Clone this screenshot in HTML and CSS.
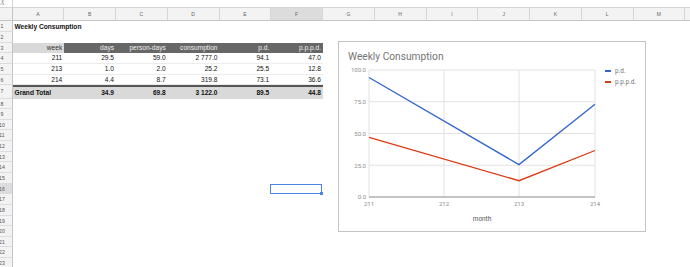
FILE: index.html
```html
<!DOCTYPE html>
<html lang="en">
<head>
  <meta charset="UTF-8" />
  <title>Weekly Consumption</title>
  <link rel="stylesheet" href="styles.css">
</head>
<body>
  <div class="formula-bar">
    <span class="fx-icon">X</span>
    <div class="fx-sep"></div>
  </div>
  <div class="sheet" id="sheet">
    <!-- Rows will be injected here -->
  </div>

  <div class="chart">
    <svg width="308" height="191" viewBox="338 41 308 191">
      <text class="chart-title" x="348" y="60">Weekly Consumption</text>

      <g class="grid">
        <line x1="369" y1="70" x2="595" y2="70" />
        <line x1="369" y1="101.75" x2="595" y2="101.75" />
        <line x1="369" y1="133.5" x2="595" y2="133.5" />
        <line x1="369" y1="165.25" x2="595" y2="165.25" />
        <line x1="369" y1="70" x2="369" y2="197" />
        <line x1="444" y1="70" x2="444" y2="197" />
        <line x1="519" y1="70" x2="519" y2="197" />
        <line x1="595" y1="70" x2="595" y2="197" />
      </g>
      <line class="baseline" x1="369" y1="197" x2="595" y2="197" />

      <g class="y-labels">
        <text x="366" y="72.2">100.0</text>
        <text x="366" y="104">75.0</text>
        <text x="366" y="135.7">50.0</text>
        <text x="366" y="167.5">25.0</text>
        <text x="366" y="199.2">0.0</text>
      </g>
      <g class="x-labels">
        <text x="369" y="205.5">211</text>
        <text x="444" y="205.5">212</text>
        <text x="519" y="205.5">213</text>
        <text x="595" y="205.5">214</text>
      </g>
      <text class="axis-title" x="482" y="220.5">month</text>

      <polyline class="series-pd" points="369,77.5 519,164.6 595,104.2" />
      <polyline class="series-pppd" points="369,137.3 519,180.7 595,150.5" />

      <line class="legend-pd" x1="605" y1="71" x2="611" y2="71" />
      <text class="legend-text" x="615" y="73.2">p.d.</text>
      <line class="legend-pppd" x1="605" y1="82" x2="611" y2="82" />
      <text class="legend-text" x="615" y="84.2">p.p.p.d.</text>
    </svg>
  </div>

  <div class="selection"><span class="handle"></span></div>

  <script>
    const columns = ['A','B','C','D','E','F','G','H','I','J','K','L','M',''];

    // Pivot table content, keyed by row number
    const rows = {
      1: { cls: 'title-row', cells: ['Weekly Consumption'] },
      3: { cls: 'head-row', cells: ['week', 'days', 'person-days', 'consumption', 'p.d.', 'p.p.p.d.'] },
      4: { cls: 'data-row', cells: ['211', '29.5', '59.0', '2 777.0', '94.1', '47.0'] },
      5: { cls: 'data-row', cells: ['213', '1.0', '2.0', '25.2', '25.5', '12.8'] },
      6: { cls: 'data-row', cells: ['214', '4.4', '8.7', '319.8', '73.1', '36.6'] },
      7: { cls: 'total-row', cells: ['Grand Total', '34.9', '69.8', '3 122.0', '89.5', '44.8'] }
    };

    function buildSheet() {
      const sheet = document.getElementById('sheet');

      const head = document.createElement('div');
      head.className = 'row col-heads';
      head.innerHTML = '<div class="row-head corner"></div>' + columns.map(c =>
        `<div class="col-head${c === 'F' ? ' active' : ''}">${c}</div>`).join('');
      sheet.appendChild(head);

      for (let n = 1; n <= 23; n++) {
        const info = rows[n];
        const row = document.createElement('div');
        row.className = 'row' + (info ? ' ' + info.cls : '');
        let html = `<div class="row-head${n === 16 ? ' active' : ''}"><span>${n}</span></div>`;
        if (info) {
          html += info.cells.map((text, i) => `<div class="cell${i === 0 ? ' first' : ''}">${text}</div>`).join('');
        }
        row.innerHTML = html;
        sheet.appendChild(row);
      }
    }

    document.addEventListener('DOMContentLoaded', buildSheet);
  </script>
</body>
</html>
```

FILE: styles.css
```css
body {
  margin: 0;
  padding: 0;
  background: white;
  font-family: 'Liberation Sans', Arial, sans-serif;
  color: #111;
  overflow: hidden;
  width: 690px;
  height: 267px;
  position: relative;
}
.formula-bar {
  height: 7px;
  border-bottom: 1px solid #d4d4d4;
  position: relative;
  overflow: hidden;
}
.fx-icon {
  position: absolute;
  left: 0;
  top: -2px;
  font-family: 'Liberation Serif', serif;
  font-style: italic;
  font-size: 8px;
  color: #999;
}
.fx-sep {
  position: absolute;
  left: 12px;
  top: 0;
  width: 1px;
  height: 7px;
  background: #d4d4d4;
}
.sheet {
  display: flex;
  flex-direction: column;
  overflow: hidden;
}
.row {
  display: flex;
  height: 10.65px;
  line-height: 10.65px;
}
.row-head {
  width: 12.5px;
  flex: none;
  box-sizing: border-box;
  background: #f3f3f3;
  border-right: 1px solid #c4c4c4;
  border-bottom: 1px solid #dcdcdc;
  overflow: hidden;
  font-size: 5.2px;
  color: #555;
}
.row-head span {
  display: block;
  width: 20px;
  margin-left: -8px;
  text-align: center;
}
.row-head.active {
  background: #dcdcdc;
}
.col-heads {
  height: 13px;
  line-height: 12px;
}
.col-heads .row-head {
  border-bottom: 1px solid #c4c4c4;
}
.col-head {
  width: 51.75px;
  flex: none;
  box-sizing: border-box;
  background: #f3f3f3;
  border-right: 1px solid #d6d6d6;
  border-bottom: 1px solid #c4c4c4;
  text-align: center;
  font-size: 5px;
  color: #666;
}
.col-head.active {
  background: #dcdcdc;
}
.cell {
  width: 51.75px;
  flex: none;
  box-sizing: border-box;
  padding: 0 2px;
  font-size: 6.6px;
  text-align: right;
  white-space: nowrap;
}
.title-row {
  height: 11px;
  line-height: 11px;
}
.title-row .cell {
  text-align: left;
  font-weight: bold;
  overflow: visible;
}
.head-row .cell {
  background: #676767;
  color: #eeeeee;
}
.head-row .cell.first {
  background: #d9d9d9;
  color: #333;
}
.data-row .cell {
  border-bottom: 1px solid #ececec;
}
.total-row {
  height: 13.3px;
  line-height: 12px;
}
.total-row .cell {
  border-top: 2.5px solid #555;
  background: #d9d9d9;
  font-weight: bold;
  color: #111;
}
.total-row .cell.first {
  text-align: left;
}

/* Floating chart over the grid */
.chart {
  position: absolute;
  left: 338px;
  top: 41px;
  width: 308px;
  height: 191px;
  box-sizing: border-box;
  border: 1px solid #c4c4c4;
  background: white;
  overflow: hidden;
}
.chart svg {
  display: block;
  margin: -1px 0 0 -1px;
  font-family: Roboto, 'Liberation Sans', sans-serif;
}
.chart-title {
  font-size: 10.2px;
  fill: #757575;
}
.grid line {
  stroke: #e2e2e2;
  stroke-width: 1;
}
.baseline {
  stroke: #8a8a8a;
  stroke-width: 1.2;
}
.y-labels text {
  font-size: 6px;
  fill: #8e8e8e;
  text-anchor: end;
}
.x-labels text {
  font-size: 6px;
  fill: #8e8e8e;
  text-anchor: middle;
}
.axis-title {
  font-size: 6.4px;
  fill: #555;
  text-anchor: middle;
}
.series-pd {
  fill: none;
  stroke: #3366cc;
  stroke-width: 1.3;
}
.series-pppd {
  fill: none;
  stroke: #dc3912;
  stroke-width: 1.3;
}
.legend-pd {
  stroke: #3366cc;
  stroke-width: 2;
}
.legend-pppd {
  stroke: #dc3912;
  stroke-width: 2;
}
.legend-text {
  font-size: 6.4px;
  fill: #777;
}

/* Active cell F16 */
.selection {
  position: absolute;
  left: 270px;
  top: 184px;
  width: 52px;
  height: 10px;
  box-sizing: border-box;
  border: 1px solid #4a86e8;
}
.handle {
  position: absolute;
  right: -2px;
  bottom: -2px;
  width: 3px;
  height: 3px;
  background: #4a86e8;
}
```
